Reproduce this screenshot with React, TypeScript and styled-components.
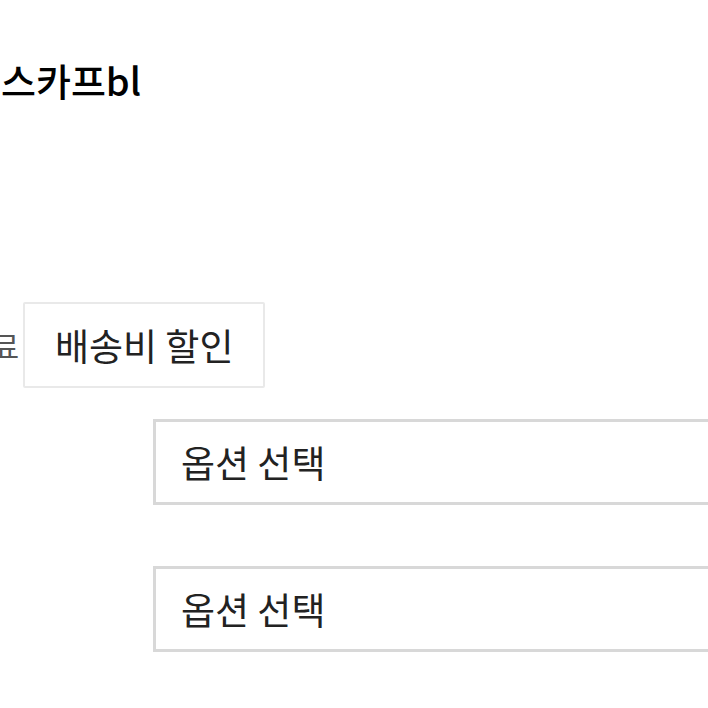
import React from 'react';
import styled, { createGlobalStyle } from 'styled-components';

const Global = createGlobalStyle`
  body {
    margin: 0;
    background: #fff;
    font-family: "Noto Sans CJK KR", "Noto Sans", sans-serif;
    overflow: hidden;
  }
`;

const Page = styled.div`
  width: 708px;
  height: 708px;
  overflow: hidden;
  display: flex;
  flex-direction: column;
`;

const Title = styled.h1`
  margin: 57px 0 0 -34px;
  font-size: 38px;
  line-height: 46px;
  font-weight: 500;
  color: #000;
  white-space: nowrap;
`;

const ShippingRow = styled.div`
  display: flex;
  align-items: center;
  gap: 4px;
  margin: 199px 0 0 -36px;
`;

const Label = styled.span`
  font-size: 30px;
  color: #555;
  white-space: nowrap;
`;

const Badge = styled.div`
  box-sizing: border-box;
  width: 242px;
  height: 86px;
  border: 2px solid #e9e9e9;
  border-radius: 2px;
  display: flex;
  align-items: center;
  justify-content: center;
  font-size: 37px;
  color: #222;
`;

const Select = styled.div<{ $top: number }>`
  box-sizing: border-box;
  margin: ${(p) => p.$top}px 0 0 153px;
  width: 620px;
  height: 86px;
  flex-shrink: 0;
  border: 3px solid #d8d8d8;
  display: flex;
  align-items: center;
  padding-left: 25px;
  font-size: 37px;
  color: #222;
`;

export default function App() {
  return (
    <Page>
      <Global />
      <Title>크스카프bl</Title>
      <ShippingRow>
        <Label>무료</Label>
        <Badge>배송비 할인</Badge>
      </ShippingRow>
      <Select $top={31}>옵션 선택</Select>
      <Select $top={61}>옵션 선택</Select>
    </Page>
  );
}
